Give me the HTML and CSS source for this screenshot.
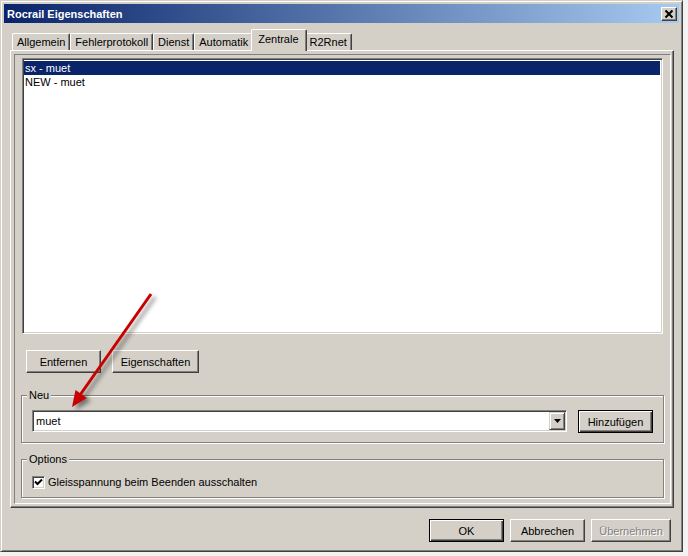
FILE: index.html
```html
<!doctype html>
<html lang="de">
  <head>
    <meta charset="utf-8" />
    <title>Rocrail Eigenschaften</title>
    <link rel="stylesheet" href="styles.css">
  </head>
  <body>
    <div class="window">
      <div class="titlebar">
        <span class="title">Rocrail Eigenschaften</span>
        <span class="close">
          <svg width="14" height="12" viewBox="0 0 14 12"><path d="M3.5 2.5 L10.5 9.5 M10.5 2.5 L3.5 9.5" stroke="#000" stroke-width="2" fill="none"/></svg>
        </span>
      </div>
      <div class="tabs">
        <div class="tab">Allgemein</div>
        <div class="tab">Fehlerprotokoll</div>
        <div class="tab">Dienst</div>
        <div class="tab">Automatik</div>
        <div class="tab active">Zentrale</div>
        <div class="tab">R2Rnet</div>
      </div>
      <div class="panel">
        <div class="page">
          <div class="listbox">
            <div class="item selected">sx - muet</div>
            <div class="item">NEW - muet</div>
          </div>
          <div class="list-buttons">
            <button class="btn" type="button">Entfernen</button>
            <button class="btn wide" type="button">Eigenschaften</button>
          </div>
          <fieldset class="group group-new">
            <legend>Neu</legend>
            <div class="combo-row">
              <div class="combo">
                <span class="combo-text">muet</span>
                <span class="combo-drop">
                  <svg width="7" height="4" viewBox="0 0 7 4"><path d="M0 0 H7 L3.5 4 Z" fill="#000"/></svg>
                </span>
              </div>
              <button class="btn default" type="button">Hinzufügen</button>
            </div>
          </fieldset>
          <fieldset class="group group-options">
            <legend>Options</legend>
            <label class="check">
              <span class="box">
                <svg width="9" height="9" viewBox="0 0 9 9"><path d="M1 3.5 L3.5 6 L8 1.5" stroke="#000" stroke-width="2" fill="none"/></svg>
              </span>
              Gleisspannung beim Beenden ausschalten
            </label>
          </fieldset>
        </div>
      </div>
      <div class="dialog-buttons">
        <button class="btn default" type="button">OK</button>
        <button class="btn" type="button">Abbrechen</button>
        <button class="btn apply" type="button" disabled>Übernehmen</button>
      </div>
      <svg class="arrow" width="683" height="552" viewBox="0 0 683 552">
        <g class="arrow-shape">
          <line x1="151" y1="294" x2="80" y2="395" stroke="#c80000" stroke-width="3"/>
          <polygon points="72,407 75.5,389.9 86.9,397.9" fill="#c80000"/>
        </g>
      </svg>
    </div>
  </body>
</html>
```

FILE: styles.css
```css
body {
  margin: 0;
  background: #f2f2f2;
  font-family: "Liberation Sans", Arial, sans-serif;
  font-size: 11px;
  color: #000;
}
.window {
  position: relative;
  width: 683px;
  height: 552px;
  box-sizing: border-box;
  padding: 3px;
  background: #d4d0c8;
  border: 1px solid;
  border-color: #d4d0c8 #404040 #404040 #d4d0c8;
  box-shadow: inset 1px 1px #fff, inset -1px -1px #808080;
  display: flex;
  flex-direction: column;
}
.titlebar {
  height: 19px;
  display: flex;
  align-items: center;
  justify-content: space-between;
  padding-left: 3px;
  background: linear-gradient(to right, #0a246a, #a6caf0);
}
.title {
  color: #fff;
  font-weight: 700;
  font-size: 11px;
}
.close {
  width: 16px;
  height: 14px;
  box-sizing: border-box;
  margin-right: 2px;
  display: flex;
  align-items: center;
  justify-content: center;
  background: #d4d0c8;
  border: 1px solid;
  border-color: #fff #404040 #404040 #fff;
  box-shadow: inset -1px -1px #808080;
}
.tabs {
  display: flex;
  align-items: flex-end;
  height: 21px;
  margin: 6px 0 0 8px;
}
.tab {
  height: 17px;
  box-sizing: border-box;
  line-height: 16px;
  padding: 0 4px;
  border: 1px solid #fff;
  border-bottom: none;
  border-right-color: #404040;
  border-radius: 2px 2px 0 0;
  box-shadow: inset -1px 0 #808080;
  background: #d4d0c8;
}
.tab.active {
  position: relative;
  z-index: 1;
  height: 22px;
  line-height: 19px;
  margin: 0 -2px -1px;
  padding: 0 7px 0 6px;
}
.panel {
  height: 458px;
  box-sizing: border-box;
  margin: 0 5px 0 6px;
  border: 1px solid;
  border-color: #fff #404040 #404040 #fff;
  box-shadow: inset -1px -1px #808080;
  display: flex;
}
.page {
  flex: 1;
  margin: 3px;
  padding: 3px 6px 0;
  border: 1px solid;
  border-color: #808080 #fff #fff #808080;
  display: flex;
  flex-direction: column;
}
.listbox {
  width: 641px;
  height: 276px;
  box-sizing: border-box;
  margin-left: 1px;
  background: #fff;
  border: 1px solid;
  border-color: #808080 #fff #fff #808080;
  box-shadow: inset 1px 1px #404040, inset -1px -1px #d4d0c8;
  padding: 2px 2px 2px 1px;
}
.item {
  height: 14px;
  line-height: 14px;
  padding-left: 1px;
}
.item.selected {
  background: #0a246a;
  color: #fff;
}
.list-buttons {
  display: flex;
  gap: 11px;
  margin: 16px 0 0 5px;
}
.btn {
  width: 75px;
  height: 23px;
  padding: 0;
  font-family: "Liberation Sans", Arial, sans-serif;
  font-size: 11px;
  color: #000;
  background: #d4d0c8;
  border: 1px solid;
  border-color: #fff #404040 #404040 #fff;
  box-shadow: inset -1px -1px #808080;
}
.btn.wide {
  width: 87px;
}
.btn.default {
  border-color: #000;
  box-shadow: inset 1px 1px #fff, inset -1px -1px #404040, inset -2px -2px #808080;
}
.btn.apply {
  width: 80px;
  color: #808080;
  text-shadow: 1px 1px #fff;
}
.group {
  margin: 16px 0 0;
  padding: 8px 10px 9px;
  border: 1px solid #808080;
  box-shadow: inset 1px 1px #fff, 1px 1px #fff;
  min-width: 0;
}
.group legend {
  margin-left: -5px;
  padding: 0 2px;
  line-height: 13px;
  background: #d4d0c8;
}
.group-options {
  margin-top: 10px;
  padding: 9px 10px 8px;
}
.combo-row {
  display: flex;
  align-items: flex-start;
  gap: 11px;
}
.combo {
  width: 535px;
  height: 22px;
  box-sizing: border-box;
  display: flex;
  align-items: center;
  background: #fff;
  border: 1px solid;
  border-color: #808080 #fff #fff #808080;
  box-shadow: inset 1px 1px #404040, inset -1px -1px #d4d0c8;
  padding: 1px 1px 1px 3px;
}
.combo-text {
  flex: 1;
}
.combo-drop {
  width: 16px;
  height: 18px;
  box-sizing: border-box;
  display: flex;
  align-items: center;
  justify-content: center;
  background: #d4d0c8;
  border: 1px solid;
  border-color: #d4d0c8 #404040 #404040 #d4d0c8;
  box-shadow: inset 1px 1px #fff, inset -1px -1px #808080;
}
.check {
  display: flex;
  align-items: center;
  gap: 3px;
  height: 14px;
}
.box {
  width: 13px;
  height: 13px;
  box-sizing: border-box;
  display: flex;
  align-items: center;
  justify-content: center;
  background: #fff;
  border: 1px solid;
  border-color: #808080 #fff #fff #808080;
  box-shadow: inset 1px 1px #404040, inset -1px -1px #d4d0c8;
}
.dialog-buttons {
  display: flex;
  justify-content: flex-end;
  gap: 6px;
  margin-top: 11px;
  padding-right: 8px;
}
.arrow {
  position: absolute;
  left: -1px;
  top: -1px;
  pointer-events: none;
}
.arrow-shape {
  filter: drop-shadow(4px 3px 2px rgba(0, 0, 0, 0.45));
}
```
